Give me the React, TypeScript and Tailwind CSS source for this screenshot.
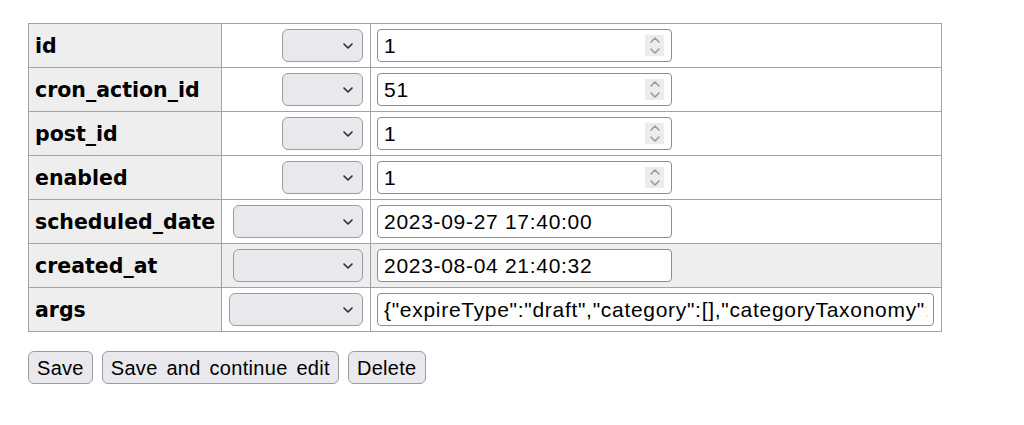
import React from 'react';

type Field = {
  name: string;
  value: string;
  kind: 'number' | 'text' | 'long';
  selectWidth: string;
};

const fields: Field[] = [
  { name: 'id', value: '1', kind: 'number', selectWidth: 'w-[81px]' },
  { name: 'cron_action_id', value: '51', kind: 'number', selectWidth: 'w-[81px]' },
  { name: 'post_id', value: '1', kind: 'number', selectWidth: 'w-[81px]' },
  { name: 'enabled', value: '1', kind: 'number', selectWidth: 'w-[81px]' },
  { name: 'scheduled_date', value: '2023-09-27 17:40:00', kind: 'text', selectWidth: 'w-[130px]' },
  { name: 'created_at', value: '2023-08-04 21:40:32', kind: 'text', selectWidth: 'w-[130px]' },
  {
    name: 'args',
    value:
      '{"expireType":"draft","category":[],"categoryTaxonomy":"","enableNotification":false,"notificationEmail":""}',
    kind: 'long',
    selectWidth: 'w-[134px]',
  },
];

function Chevron({ up = false, className }: { up?: boolean; className?: string }) {
  return (
    <svg width="10" height="6" viewBox="0 0 10 6" fill="none" className={className}>
      <path
        d={up ? 'M1 5L5 1L9 5' : 'M1 1L5 5L9 1'}
        stroke="currentColor"
        strokeWidth="1.6"
        strokeLinecap="round"
        strokeLinejoin="round"
      />
    </svg>
  );
}

function FakeSelect({ width }: { width: string }) {
  return (
    <div
      className={`${width} h-[33px] ml-auto flex items-center justify-end pr-[9px] bg-[#e9e9ed] border border-[#9a9aa2] rounded-[6px] text-[#2a2a2a]`}
    >
      <Chevron />
    </div>
  );
}

function ValueInput({ field }: { field: Field }) {
  const inputText =
    'w-full min-w-0 bg-transparent outline-none text-[21px] tracking-[0.7px] text-black px-[6px]';
  const font = { fontFamily: '"Liberation Sans", Arial, sans-serif' };

  if (field.kind === 'number') {
    return (
      <div className="w-[295px] h-[33px] flex items-center bg-white border border-[#8d8d8d] rounded-[4px] pr-[7px]">
        <input readOnly defaultValue={field.value} className={inputText} style={font} />
        <div className="w-[19px] h-[21px] shrink-0 bg-[#ececec] flex flex-col items-center justify-center gap-[5px] text-[#9b9b9b]">
          <Chevron up />
          <Chevron />
        </div>
      </div>
    );
  }

  return (
    <div
      className={`${field.kind === 'long' ? 'w-[557px]' : 'w-[295px]'} h-[33px] flex items-center bg-white border border-[#8d8d8d] rounded-[4px]`}
    >
      <input readOnly defaultValue={field.value} className={inputText} style={font} />
    </div>
  );
}

const buttonClass =
  'h-[33px] px-[8px] bg-[#e9e9ed] border border-[#9a9aa2] rounded-[6px] tracking-[0.3px] [word-spacing:3px]';

export default function App() {
  return (
    <div className="min-h-screen bg-white pt-[23px] pl-[28px]">
      <table className="table-fixed border-collapse w-[913px]">
        <colgroup>
          <col className="w-[193px]" />
          <col className="w-[149px]" />
          <col className="w-[571px]" />
        </colgroup>
        <tbody>
          {fields.map((f) => {
            const rowBg = f.name === 'created_at' ? 'bg-[#eeeeee]' : 'bg-white';
            return (
              <tr key={f.name} className="h-[44px]">
                <th
                  className="bg-[#eeeeee] border border-[#a3a3a3] text-left align-middle pl-[6px] pt-[2px] text-[20.5px] font-bold text-black"
                  style={{ fontFamily: '"DejaVu Sans", Verdana, sans-serif' }}
                >
                  {f.name}
                </th>
                <td className={`${rowBg} border border-[#a3a3a3] align-middle pr-[7px]`}>
                  <FakeSelect width={f.selectWidth} />
                </td>
                <td className={`${rowBg} border border-[#a3a3a3] align-middle pl-[6px]`}>
                  <ValueInput field={f} />
                </td>
              </tr>
            );
          })}
        </tbody>
      </table>

      <div
        className="flex gap-[9px] mt-[19px] text-[20px] text-black"
        style={{ fontFamily: '"Liberation Sans", Arial, sans-serif' }}
      >
        <button className={buttonClass}>Save</button>
        <button className={buttonClass}>Save and continue edit</button>
        <button className={buttonClass}>Delete</button>
      </div>
    </div>
  );
}
